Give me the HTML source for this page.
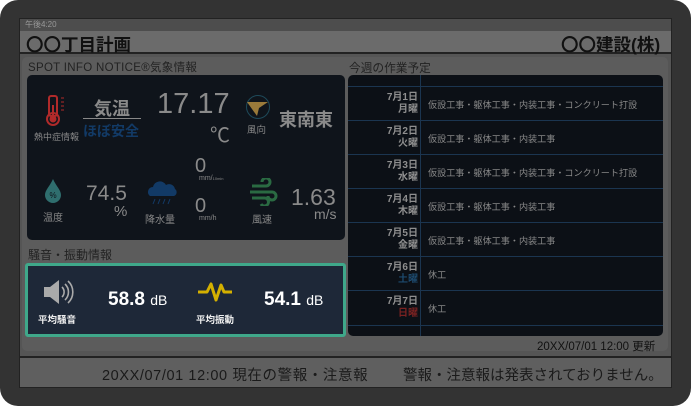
<!DOCTYPE html><html><head><meta charset="utf-8"><style>
*{margin:0;padding:0;box-sizing:border-box}
body{width:691px;height:406px;background:#fff;font-family:"Liberation Sans","Noto Sans CJK JP",sans-serif;overflow:hidden;position:relative}
.a{position:absolute}
#frame{left:0;top:0;width:691px;height:406px;background:#333;border-radius:18px}
#scr{left:19px;top:18px;width:653px;height:370px;background:#555;border:1px solid #222}
.t{color:#bbb;white-space:nowrap}
.row{position:absolute;left:0;width:315px;height:34px;border-top:1px solid #1b3550}
.d{position:absolute;left:0;width:70px;text-align:right;font-size:10px;font-weight:bold;color:#8f8f8f;line-height:12px;top:5px}
.w{position:absolute;left:80px;top:10px;font-size:9.1px;color:#888}
</style></head><body>
<div class="a" id="frame"></div>
<div class="a" id="scr"></div>
<div class="a" style="left:20px;top:19px;width:651px;height:12px;background:#4d4d4d"></div>
<div class="a t" style="left:25px;top:19px;font-size:8px;color:#999">午後4:20</div>
<div class="a" style="left:20px;top:31px;width:651px;height:23px;background:#6b6b6b;border-bottom:2px solid #222"></div>
<div class="a t" style="left:26px;top:32px;font-size:17.5px;font-weight:bold;color:#111">〇〇丁目計画</div>
<div class="a t" style="left:561px;top:32px;font-size:17.5px;font-weight:bold;color:#111">〇〇建設(株)</div>
<div class="a" style="left:22px;top:57px;width:646px;height:294px;background:#5c5c5c;border-radius:5px"></div>
<div class="a t" style="left:28px;top:59px;font-size:11.5px;color:#222;letter-spacing:0.3px">SPOT INFO NOTICE®気象情報</div>
<div class="a t" style="left:349px;top:59px;font-size:11.7px;color:#222">今週の作業予定</div>
<div class="a" style="left:27px;top:75px;width:318px;height:165px;background:#0f141b;border-radius:5px"></div>
<svg class="a" style="left:44px;top:95px" width="26" height="32" viewBox="0 0 26 32"><rect x="5" y="1" width="8" height="20" rx="2" fill="none" stroke="#b02a2a" stroke-width="2"/><circle cx="9" cy="24" r="6" fill="none" stroke="#b02a2a" stroke-width="2"/><rect x="8" y="10" width="2" height="12" fill="#b02a2a"/><circle cx="9" cy="24" r="3.5" fill="#b02a2a"/><path d="M17 3h3M17 7h3M17 11h3M17 15h3" stroke="#b02a2a" stroke-width="1"/></svg>
<div class="a t" style="left:34px;top:130px;font-size:9px;color:#888">熱中症情報</div>
<div class="a t" style="left:94px;top:95px;font-size:18px;font-weight:bold;color:#8a8a8a">気温</div>
<div class="a" style="left:83px;top:118px;width:58px;height:1px;background:#888"></div>
<div class="a t" style="left:83px;top:121px;font-size:14px;font-weight:bold;color:#123a66">ほぼ安全</div>
<div class="a t" style="left:157px;top:88px;font-size:29px;color:#8a8a8a">17.17</div>
<div class="a t" style="left:210px;top:119px;font-size:20px;color:#8a8a8a">℃</div>
<svg class="a" style="left:245px;top:94px" width="26" height="26" viewBox="0 0 26 26"><circle cx="13" cy="13" r="11.5" fill="none" stroke="#1e4a5a" stroke-width="1"/><path d="M2 8L23 8L14 14L12 22Z" fill="#9a7a3a"/></svg>
<div class="a t" style="left:247px;top:122px;font-size:9.5px;color:#888">風向</div>
<div class="a t" style="left:279px;top:106px;font-size:18px;font-weight:bold;color:#8a8a8a">東南東</div>
<svg class="a" style="left:43px;top:178px" width="20" height="26" viewBox="0 0 20 26"><path d="M10 1C7 8 2 12 2 17a8 8 0 0016 0C18 12 13 8 10 1Z" fill="#2f6e6e"/><text x="10" y="20" font-size="8" text-anchor="middle" fill="#0f141b" font-family="Liberation Sans">%</text></svg>
<div class="a t" style="left:43px;top:209px;font-size:10px;color:#888">温度</div>
<div class="a t" style="left:86px;top:182px;font-size:21px;color:#8a8a8a">74.5</div>
<div class="a t" style="left:114px;top:203px;font-size:15px;color:#8a8a8a">%</div>
<svg class="a" style="left:145px;top:178px" width="34" height="28" viewBox="0 0 34 28"><path d="M5 18a5 5 0 013-9 7 7 0 0113-2 6 6 0 019 4 4 4 0 01-1 7z" fill="#123a66"/><path d="M10 21l-2 5M15 21l-2 5M20 21l-2 5M25 21l-2 5" stroke="#123a66" stroke-width="1"/></svg>
<div class="a t" style="left:145px;top:211px;font-size:10px;color:#888">降水量</div>
<div class="a t" style="left:195px;top:155px;font-size:20px;color:#8a8a8a">0</div>
<div class="a t" style="left:199px;top:175px;font-size:7px;color:#888">mm/<span style="font-size:4px">10min</span></div>
<div class="a t" style="left:195px;top:195px;font-size:20px;color:#8a8a8a">0</div>
<div class="a t" style="left:199px;top:215px;font-size:7px;color:#888">mm/h</div>
<svg class="a" style="left:248px;top:178px" width="30" height="28" viewBox="0 0 30 28"><path d="M4 8h14a4 4 0 10-4-4M2 14h22a4 4 0 11-4 4M4 20h12a4 4 0 11-3 6" fill="none" stroke="#2a6a42" stroke-width="3"/></svg>
<div class="a t" style="left:252px;top:211px;font-size:10px;color:#888">風速</div>
<div class="a t" style="left:291px;top:184px;font-size:23px;color:#8a8a8a">1.63</div>
<div class="a t" style="left:314px;top:206px;font-size:14px;color:#8a8a8a">m/s</div>
<div class="a t" style="left:28px;top:246px;font-size:12px;color:#222">騒音・振動情報</div>
<div class="a" style="left:25px;top:263px;width:321px;height:74px;background:#1e2838;border:3px solid #3fa88a;border-radius:3px"></div>
<svg class="a" style="left:42px;top:279px" width="34" height="26" viewBox="0 0 34 26"><path d="M2 8h6l9-7v24l-9-7H2z" fill="#aaa"/><path d="M20 8a7 7 0 010 10M23 5a11 11 0 010 16M26 2a15 15 0 010 22" fill="none" stroke="#aaa" stroke-width="1.6"/></svg>
<div class="a t" style="left:38px;top:312px;font-size:9.5px;font-weight:bold;color:#eee">平均騒音</div>
<div class="a t" style="left:108px;top:289px;font-size:19px;font-weight:bold;color:#fff">58.8 <span style="font-size:14px;font-weight:normal">dB</span></div>
<svg class="a" style="left:197px;top:281px" width="36" height="22" viewBox="0 0 36 22"><path d="M1 11h9l4-8 5 16 5-15 3 7h8" fill="none" stroke="#d4b000" stroke-width="3" stroke-linejoin="round"/></svg>
<div class="a t" style="left:196px;top:312px;font-size:9.5px;font-weight:bold;color:#eee">平均振動</div>
<div class="a t" style="left:264px;top:289px;font-size:19px;font-weight:bold;color:#fff">54.1 <span style="font-size:14px;font-weight:normal">dB</span></div>
<div class="a" style="left:348px;top:75px;width:315px;height:261px;background:#0c1016;border-radius:5px;overflow:hidden">
<div class="a" style="left:72px;top:0;width:1px;height:261px;background:#1b3550"></div>
<div class="row" style="top:11px"><div class="d">7月1日<br>月曜</div><div class="w">仮設工事・躯体工事・内装工事・コンクリート打設</div></div>
<div class="row" style="top:45px"><div class="d">7月2日<br>火曜</div><div class="w">仮設工事・躯体工事・内装工事</div></div>
<div class="row" style="top:79px"><div class="d">7月3日<br>水曜</div><div class="w">仮設工事・躯体工事・内装工事・コンクリート打設</div></div>
<div class="row" style="top:113px"><div class="d">7月4日<br>木曜</div><div class="w">仮設工事・躯体工事・内装工事</div></div>
<div class="row" style="top:147px"><div class="d">7月5日<br>金曜</div><div class="w">仮設工事・躯体工事・内装工事</div></div>
<div class="row" style="top:181px"><div class="d">7月6日<br><span style="color:#1d4a6e">土曜</span></div><div class="w">休工</div></div>
<div class="row" style="top:215px"><div class="d">7月7日<br><span style="color:#7a2222">日曜</span></div><div class="w">休工</div></div>
<div class="row" style="top:250px"></div>
</div>
<div class="a t" style="left:537px;top:338px;font-size:11.5px;color:#111">20XX/07/01 12:00 更新</div>
<div class="a" style="left:20px;top:356px;width:651px;height:31px;background:#5f5f5f;border-top:2px solid #222"></div>
<div class="a t" style="left:102px;top:364px;font-size:14.5px;color:#1a1a1a;letter-spacing:0.6px">20XX/07/01 12:00 現在の警報・注意報</div>
<div class="a t" style="left:403px;top:364px;font-size:14.5px;color:#1a1a1a">警報・注意報は発表されておりません。</div>
</body></html>
